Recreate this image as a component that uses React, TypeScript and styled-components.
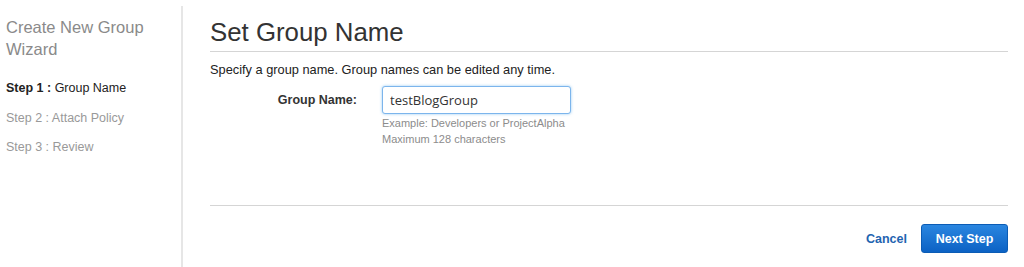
import React from "react";
import styled, { createGlobalStyle } from "styled-components";

const Global = createGlobalStyle`
  html, body { margin: 0; padding: 0; background: #fff; }
  body { font-family: "Liberation Sans", Arial, sans-serif; color: #333; }
`;

const Page = styled.div`
  display: flex;
  width: 1024px;
  height: 267px;
  overflow: hidden;
`;

const Sidebar = styled.aside`
  width: 183px;
  padding: 10px 0 0 6px;
  border-right: 2px solid #e6e6e6;
  margin-top: 6px;
  box-sizing: border-box;
  flex-shrink: 0;
`;

const WizardTitle = styled.div`
  font-size: 16.5px;
  line-height: 22px;
  color: #8a8a8a;
  margin: 0 0 21px 0;
`;

const StepItem = styled.div<{ $active?: boolean }>`
  font-size: 12.5px;
  line-height: 15px;
  color: ${(p) => (p.$active ? "#222" : "#999")};
  margin-bottom: 14.5px;
`;

const StepLabel = styled.span<{ $active?: boolean }>`
  font-weight: ${(p) => (p.$active ? "bold" : "normal")};
`;

const Main = styled.main`
  flex: 1;
  padding: 0 16px 0 27px;
  display: flex;
  flex-direction: column;
`;

const Title = styled.h1`
  font-size: 25.8px;
  font-weight: normal;
  color: #333;
  margin: 0;
  padding: 19px 0 5px 0;
  line-height: 27px;
  border-bottom: 1px solid #d5d5d5;
`;

const Intro = styled.p`
  font-size: 12.8px;
  line-height: 15px;
  margin: 10px 0 0 0;
  color: #222;
`;

const FieldRow = styled.div`
  display: flex;
  align-items: flex-start;
  margin-top: 9px;
`;

const FieldLabel = styled.label`
  width: 147px;
  text-align: right;
  font-size: 12.5px;
  font-weight: bold;
  color: #333;
  padding-top: 7px;
  flex-shrink: 0;
`;

const FieldBody = styled.div`
  margin-left: 25px;
  display: flex;
  flex-direction: column;
`;

const TextInput = styled.input`
  width: 189px;
  height: 28px;
  box-sizing: border-box;
  border: 1px solid #7cb5ec;
  border-radius: 3px;
  box-shadow: 0 0 3px rgba(82, 168, 236, 0.6);
  font-family: "Open Sans", "DejaVu Sans", sans-serif;
  font-size: 13px;
  color: #333;
  padding: 0 7px;
  outline: none;
`;

const Hint = styled.div`
  font-size: 11px;
  line-height: 16px;
  color: #8c8c8c;
`;

const HintBlock = styled.div`
  margin-top: 1px;
`;

const Spacer = styled.div`
  flex: 1;
  max-height: 58px;
  min-height: 58px;
`;

const Footer = styled.div`
  border-top: 1px solid #d5d5d5;
  display: flex;
  justify-content: flex-end;
  align-items: center;
  gap: 14px;
  padding-top: 18px;
`;

const CancelLink = styled.a`
  font-size: 12.5px;
  font-weight: bold;
  color: #1f64b0;
  text-decoration: none;
  cursor: pointer;
`;

const PrimaryButton = styled.button`
  width: 87px;
  height: 29px;
  border: 1px solid #0b5cb5;
  border-radius: 3px;
  background: linear-gradient(#2a86e0, #0c62c4);
  color: #fff;
  font-family: "Liberation Sans", Arial, sans-serif;
  font-size: 12.5px;
  font-weight: bold;
  cursor: pointer;
`;

export default function App() {
  return (
    <>
      <Global />
      <Page>
        <Sidebar>
          <WizardTitle>
            Create New Group
            <br />
            Wizard
          </WizardTitle>
          <StepItem $active>
            <StepLabel $active>Step 1 :</StepLabel> Group Name
          </StepItem>
          <StepItem>Step 2 : Attach Policy</StepItem>
          <StepItem>Step 3 : Review</StepItem>
        </Sidebar>
        <Main>
          <Title>Set Group Name</Title>
          <Intro>Specify a group name. Group names can be edited any time.</Intro>
          <FieldRow>
            <FieldLabel>Group Name:</FieldLabel>
            <FieldBody>
              <TextInput defaultValue="testBlogGroup" />
              <HintBlock>
                <Hint>Example: Developers or ProjectAlpha</Hint>
                <Hint>Maximum 128 characters</Hint>
              </HintBlock>
            </FieldBody>
          </FieldRow>
          <Spacer />
          <Footer>
            <CancelLink>Cancel</CancelLink>
            <PrimaryButton>Next Step</PrimaryButton>
          </Footer>
        </Main>
      </Page>
    </>
  );
}
